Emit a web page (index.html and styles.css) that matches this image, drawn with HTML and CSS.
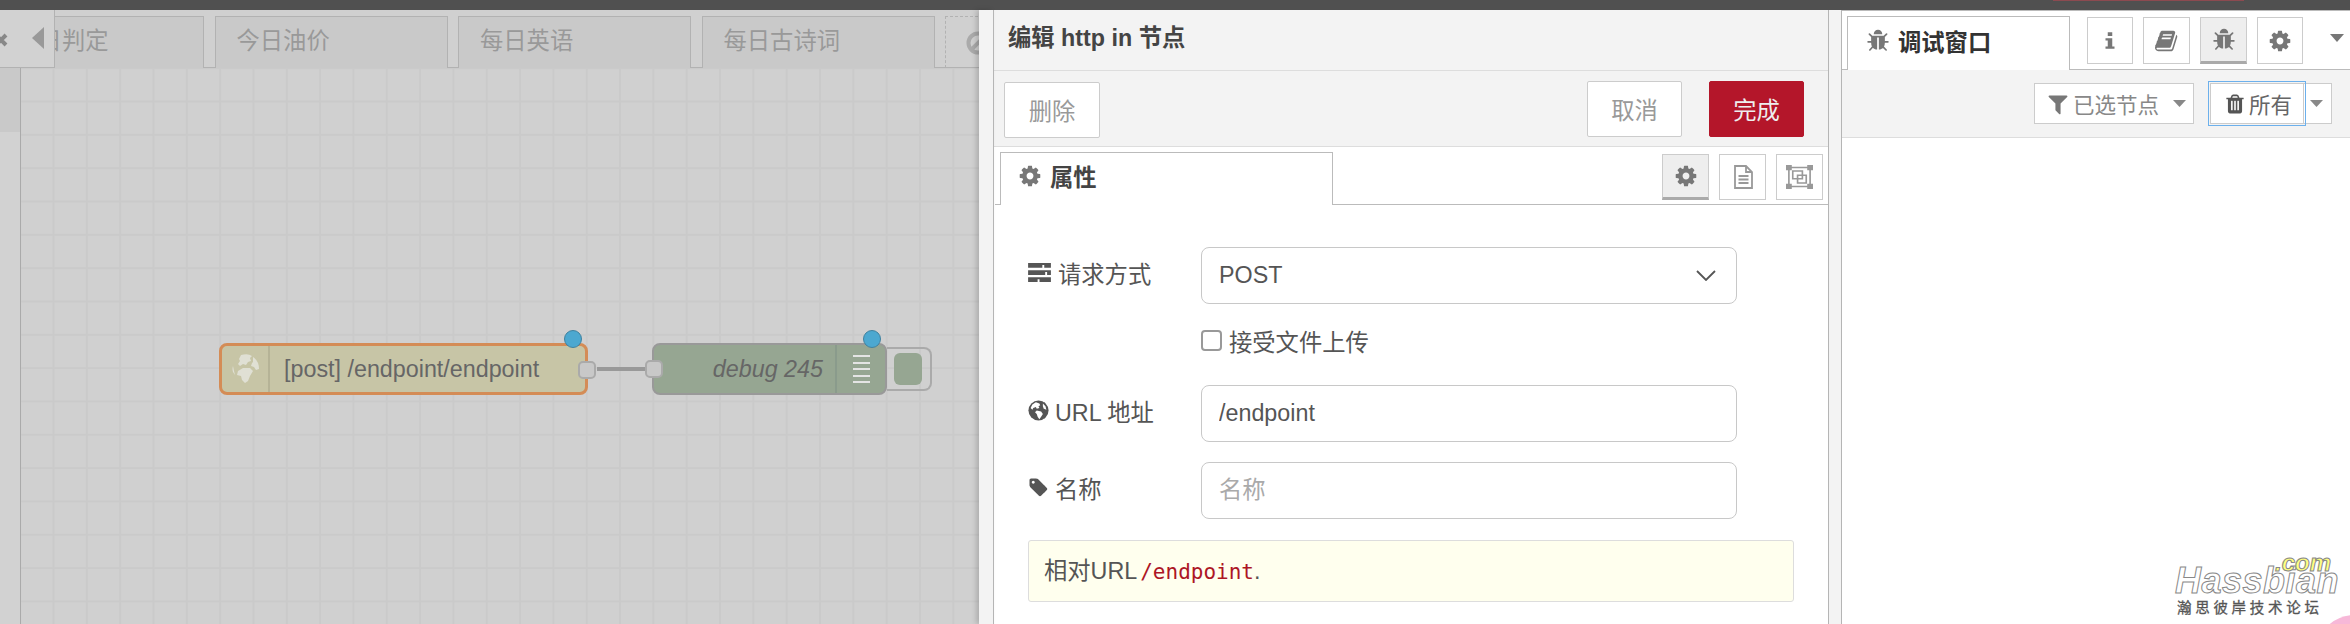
FILE: index.html
```html
<!DOCTYPE html>
<html>
  <head>
    <title>Node-RED</title>
    <link rel="stylesheet" href="styles.css">
  </head>
  <body>
    <svg class="sprite" xmlns="http://www.w3.org/2000/svg">
      <symbol id="i-cog" viewBox="0 0 1792 1792"><path d="M1152 896q0-106-75-181t-181-75-181 75-75 181 75 181 181 75 181-75 75-181zm512-109v222q0 12-8 23t-20 13l-185 28q-19 54-39 91 35 50 107 138 10 12 10 25t-9 23q-27 37-99 108t-94 71q-12 0-26-9l-138-108q-44 23-91 38-16 136-29 186-7 28-36 28h-222q-14 0-24.5-8.5t-11.5-21.5l-28-184q-49-16-90-37l-141 107q-10 9-25 9-14 0-25-11-126-114-165-168-7-10-7-23 0-12 8-23 15-21 51-66.5t54-70.5q-27-50-41-99l-183-27q-13-2-21-12.5t-8-23.5v-222q0-12 8-23t19-13l186-28q14-46 39-92-40-57-107-138-10-12-10-24 0-10 9-23 26-36 98.5-107.5t94.5-71.5q13 0 26 10l138 107q44-23 91-38 16-136 29-186 7-28 36-28h222q14 0 24.5 8.5t11.5 21.5l28 184q49 16 90 37l142-107q9-9 24-9 13 0 25 10 129 119 165 170 7 8 7 22 0 12-8 23-15 21-51 66.5t-54 70.5q26 50 41 98l183 28q13 2 21 12.5t8 23.5z"/></symbol>
      <symbol id="i-tag" viewBox="0 0 1792 1792"><path d="M576 448q0-53-37.5-90.5t-90.5-37.5-90.5 37.5-37.5 90.5 37.5 90.5 90.5 37.5 90.5-37.5 37.5-90.5zm1067 576q0 53-37 90l-491 492q-39 37-91 37-53 0-90-37l-715-716q-38-37-64.5-101t-26.5-117v-416q0-52 38-90t90-38h416q53 0 117 26.5t102 64.5l715 714q37 39 37 91z"/></symbol>
      <symbol id="i-filter" viewBox="0 0 1792 1792"><path d="M1595 295q17 41-14 70l-493 493v742q0 42-39 59-13 5-25 5-27 0-45-19l-256-256q-19-19-19-45v-486l-493-493q-31-29-14-70 17-39 59-39h1280q42 0 59 39z"/></symbol>
      <symbol id="i-trash" viewBox="0 0 1792 1792"><path d="M704 1376v-704q0-14-9-23t-23-9h-64q-14 0-23 9t-9 23v704q0 14 9 23t23 9h64q14 0 23-9t9-23zm256 0v-704q0-14-9-23t-23-9h-64q-14 0-23 9t-9 23v704q0 14 9 23t23 9h64q14 0 23-9t9-23zm256 0v-704q0-14-9-23t-23-9h-64q-14 0-23 9t-9 23v704q0 14 9 23t23 9h64q14 0 23-9t9-23zm-544-992h448l-48-117q-7-9-17-11h-317q-10 2-17 11zm928 32v64q0 14-9 23t-23 9h-96v948q0 83-47 143.5t-113 60.5h-832q-66 0-113-58.5t-47-141.5v-952h-96q-14 0-23-9t-9-23v-64q0-14 9-23t23-9h309l70-167q15-37 54-63t79-26h320q40 0 79 26t54 63l70 167h309q14 0 23 9t9 23z"/></symbol>
      <symbol id="i-bug" viewBox="0 0 1792 1792"><path d="M1696 960q0 26-19 45t-45 19h-224q0 171-67 290l208 209q19 19 19 45t-19 45q-18 19-45 19t-45-19l-198-197q-5 5-15 13t-42 28.5-65 36.5-82 29-97 13v-896h-128v896q-51 0-101.5-13.5t-87-33-66-39-43.5-32.5l-15-14-183 207q-20 21-48 21-24 0-43-16-19-18-20.5-44.5t15.5-46.5l202-227q-58-114-58-274h-224q-26 0-45-19t-19-45 19-45 45-19h224v-294l-173-173q-19-19-19-45t19-45 45-19 45 19l173 173h844l173-173q19-19 45-19t45 19 19 45-19 45l-173 173v294h224q26 0 45 19t19 45zm-480-576h-640q0-133 93.5-226.5t226.5-93.5 226.5 93.5 93.5 226.5z"/></symbol>
      <symbol id="i-book" viewBox="0 0 1792 1792"><path d="M1639 478q40 57 18 129l-275 906q-19 64-76.5 107.5t-122.5 43.5h-923q-77 0-148.5-53.5t-99.5-131.5q-24-67-2-127 0-4 3-27t4-37q1-8-3-21.5t-3-19.5q2-11 8-21t16.5-23.5 16.5-23.5q23-38 45-91.5t30-91.5q3-10 .5-30t-.5-28q3-11 17-28t17-23q21-36 42-92t25-90q1-9-2.5-32t.5-28q4-13 22-30.5t22-22.5q19-26 42.5-84.5t27.5-96.5q1-8-3-25.5t-2-26.5q2-8 9-18t18-23 17-21q8-12 16.5-30.5t15-35 16-36 19.5-32 26.5-23.5 36-11.5 47.5 5.5l-1 3q38-9 51-9h761q74 0 114 56t18 130l-274 906q-36 119-71.5 153.5t-128.5 34.5h-869q-27 0-38 15-11 16-1 43 24 70 144 70h923q29 0 56-15.5t35-41.5l300-987q7-22 5-57 38 15 59 43zm-1064 2q-4 13 2 22.5t20 9.5h608q13 0 25.5-9.5t16.5-22.5l21-64q4-13-2-22.5t-20-9.5h-608q-13 0-25.5 9.5t-16.5 22.5zm-83 256q-4 13 2 22.5t20 9.5h608q13 0 25.5-9.5t16.5-22.5l21-64q4-13-2-22.5t-20-9.5h-608q-13 0-25.5 9.5t-16.5 22.5z"/></symbol>
      <symbol id="i-info" viewBox="0 0 16 24"><path d="M5 1h6v5H5zM2 9h9v11h3v3H2v-3h3v-8H2z"/></symbol>
      <symbol id="i-file" viewBox="0 0 20 24"><path d="M2 1h11l6 6v16H2z M13 1v6h6 M5.500 11h10 M5.500 14.500h10 M5.500 18h10" fill="none" stroke="currentColor" stroke-width="1.800"/></symbol>
      <symbol id="i-expand" viewBox="0 0 28 28" preserveAspectRatio="none"><path d="M3 3h22v22H3z" fill="none" stroke="currentColor" stroke-width="1.700"/><path d="M7 7h10v9H7zM12 12h9v9h-9z" fill="none" stroke="currentColor" stroke-width="1.700"/><path fill="currentColor" d="M0 0h6v6H0zM22 0h6v6h-6zM0 22h6v6H0zM22 22h6v6h-6z"/></symbol>
      <symbol id="i-tasks" viewBox="0 0 24 20"><path d="M0 0h24v5H17V2h-2v3H0zM0 7.500h24v5H20v-3h-2v3H0zM0 15h24v5H12v-3h-2v3H0z"/></symbol>
      <symbol id="i-globe" viewBox="0 0 24 24"><circle cx="12" cy="12" r="11.500"/><path fill="#fff" d="M9 2.500 13 4l1 2-2 1 1 2-3 1-1-2-3 1-1 2-2-2 2-4zM17 4l3 3 1 4-3-1-1-3zM10 12l5 1 2 3-2 3-2 3-2-3-1-3-2-2z"/></symbol>
      <symbol id="i-globe-node" viewBox="0 0 28 30"><path d="M9 1q7-2 11 1l-2 2 1 3-3 1-2 3-3-1-3 2-2-2 2-3-1-2zM21 3q6 4 6 12l-3 1-2-3-3-1 1-3 1-1zM11 14l7 0 3 3-3 5-2 5-3 2-3-3-1-4-4-1 1-4zM1 12l1 5 1 4-2-3q-1-3 0-6z"/></symbol>
      <symbol id="i-caret" viewBox="0 0 14 8" preserveAspectRatio="none"><path d="M0 0h14L7 8z"/></symbol>
    </svg>

    <div class="topbar"><span class="deploy-edge"></span></div>

    <div class="main">
      <div class="workspace">
        <div class="tabbar">
          <div class="tab-scroll">
            <svg class="tab-close" viewBox="0 0 16 16"><path d="M3 3l10 10M13 3L3 13" stroke="#888" stroke-width="4" fill="none"/></svg>
            <svg class="tab-left" viewBox="0 0 12 22"><path d="M12 0v22L0 11z"/></svg>
          </div>
          <div class="flow-tab flow-tab-first">节假日判定</div>
          <div class="flow-tab">今日油价</div>
          <div class="flow-tab">每日英语</div>
          <div class="flow-tab">每日古诗词</div>
          <div class="flow-tab flow-tab-off">
            <svg class="tab-ban" viewBox="0 0 24 24"><circle cx="12" cy="12" r="9.500" fill="none" stroke="#aaa" stroke-width="4"/><path d="M5 19L19 5" stroke="#aaa" stroke-width="4"/></svg>
          </div>
        </div>
        <div class="work-row">
          <div class="palette"><div class="palette-head"></div></div>
          <div class="canvas">
            <div class="node node-http">
              <div class="node-icon"><svg class="icon-globe-node"><use href="#i-globe-node"/></svg></div>
              <div class="node-label">[post] /endpoint/endpoint</div>
              <span class="port port-out"></span>
              <span class="changed changed-http"></span>
            </div>
            <div class="wire"></div>
            <div class="node node-debug">
              <span class="port port-in"></span>
              <div class="node-label node-label-right">debug 245</div>
              <div class="node-icon node-icon-right">
                <i></i><i></i><i></i><i></i><i></i>
              </div>
              <span class="changed changed-debug"></span>
            </div>
            <div class="node-toggle"><span></span></div>
          </div>
        </div>
      </div>

      <div class="strip strip-left"></div>

      <div class="tray">
        <div class="tray-title">编辑 http in 节点</div>
        <div class="tray-actions">
          <button class="btn btn-delete">删除</button>
          <span class="spacer"></span>
          <button class="btn">取消</button>
          <button class="btn btn-primary">完成</button>
        </div>
        <div class="tray-tabs">
          <div class="tray-tab"><svg class="icon"><use href="#i-cog"/></svg>属性</div>
          <span class="spacer"></span>
          <div class="mini-tab mini-tab-on"><svg class="icon"><use href="#i-cog"/></svg></div>
          <div class="mini-tab"><svg class="icon icon-light"><use href="#i-file"/></svg></div>
          <div class="mini-tab"><svg class="icon icon-light icon-expand"><use href="#i-expand"/></svg></div>
        </div>
        <div class="form">
          <div class="form-row">
            <label class="form-label"><svg class="icon-tasks"><use href="#i-tasks"/></svg>请求方式</label>
            <div class="select">POST
              <svg class="chevron" viewBox="0 0 20 11"><path d="M1 1l9 9 9-9" fill="none" stroke="#555" stroke-width="1.800"/></svg>
            </div>
          </div>
          <div class="form-check">
            <span class="checkbox"></span>接受文件上传
          </div>
          <div class="form-row form-row-url">
            <label class="form-label"><svg class="icon-label"><use href="#i-globe"/></svg>URL 地址</label>
            <input class="input" type="text" value="/endpoint">
          </div>
          <div class="form-row form-row-name">
            <label class="form-label"><svg class="icon-label"><use href="#i-tag"/></svg>名称</label>
            <input class="input" type="text" placeholder="名称">
          </div>
          <div class="tip">相对URL<code>/endpoint</code>.</div>
        </div>
      </div>

      <div class="strip strip-right"></div>

      <div class="sidebar">
        <div class="side-tabs">
          <div class="side-tab"><svg class="icon"><use href="#i-bug"/></svg>调试窗口</div>
          <div class="side-btn side-btn-info"><svg class="icon-info"><use href="#i-info"/></svg></div>
          <div class="side-btn side-btn-book"><svg class="icon"><use href="#i-book"/></svg></div>
          <div class="side-btn side-btn-bug"><svg class="icon"><use href="#i-bug"/></svg></div>
          <div class="side-btn side-btn-cog"><svg class="icon"><use href="#i-cog"/></svg></div>
          <svg class="side-caret"><use href="#i-caret"/></svg>
        </div>
        <div class="side-tools">
          <div class="tool tool-filter">
            <svg class="icon"><use href="#i-filter"/></svg><span class="tool-text">已选节点</span>
            <svg class="tool-caret"><use href="#i-caret"/></svg>
          </div>
          <div class="tool tool-clear"><svg class="icon"><use href="#i-trash"/></svg><span class="tool-text">所有</span></div>
          <div class="tool tool-more"><svg class="tool-caret"><use href="#i-caret"/></svg></div>
        </div>
        <div class="watermark">
          <span class="wm-com">.com</span>
          <span class="wm-name">Hassbian</span>
          <span class="wm-cn">瀚思彼岸技术论坛</span>
        </div>
        <span class="wm-blob"></span>
      </div>
    </div>
  </body>
</html>
```

FILE: styles.css
```css
* {
    box-sizing: border-box;
}

html, body {
    margin: 0;
    height: 100%;
    overflow: hidden;
}

body {
    width: 2350px;
    height: 624px;
    font-family: "Liberation Sans", "Noto Sans CJK SC", sans-serif;
    font-size: 23.3px;
    color: #555;
    background: #fff;
    display: flex;
    flex-direction: column;
}

.sprite {
    display: none;
}

.spacer {
    flex: 1;
}

.topbar {
    height: 10px;
    flex: none;
    background: #505050;
    padding-left: 2053px;
}

.deploy-edge {
    display: block;
    width: 191px;
    height: 1px;
    background: #8c4a50;
}

.main {
    flex: 1;
    display: flex;
    min-height: 0;
}

/* dimmed workspace */
.workspace {
    width: 979px;
    flex: none;
    display: flex;
    flex-direction: column;
    background: #d0d0d0;
    overflow: hidden;
}

.tabbar {
    height: 58px;
    flex: none;
    position: relative;
    display: flex;
    gap: 10.5px;
    padding: 6px 0 0 0;
    margin-left: -30px;
    border-bottom: 1px solid #b2b2b2;
}

.tab-scroll {
    position: absolute;
    left: 30px;
    top: 0;
    width: 55px;
    height: 58px;
    background: #d2d2d2;
    border-right: 1px solid #b2b2b2;
    border-bottom: 1px solid #b2b2b2;
    z-index: 2;
}

.tab-close {
    position: absolute;
    left: -7px;
    top: 22px;
    width: 16px;
    height: 16px;
}

.tab-left {
    position: absolute;
    left: 32px;
    top: 17px;
    width: 12px;
    height: 22px;
    fill: #999;
}

.flow-tab {
    width: 233px;
    flex: none;
    height: 52px;
    line-height: 49px;
    padding-left: 21px;
    background: #c9c9c9;
    border: 1px solid #b2b2b2;
    border-bottom: 0;
    color: #999;
    white-space: nowrap;
}

.flow-tab-first {
    width: 234px;
    padding-left: 21px;
}

.flow-tab-off {
    background: transparent;
    border-style: dashed;
    padding-left: 20px;
}

.tab-ban {
    width: 24px;
    height: 24px;
    vertical-align: -6px;
}

.work-row {
    flex: 1;
    display: flex;
    min-height: 0;
}

.palette {
    width: 21px;
    flex: none;
    background: #d2d2d2;
    border-right: 1px solid #aaa;
}

.palette-head {
    height: 64px;
    background: #c9c9c9;
}

/* grid is 20px of the app at 1.667 zoom */
.canvas {
    flex: 1;
    position: relative;
    background-color: #d0d0d0;
    background-image:
        linear-gradient(90deg, #cacaca 1.6px, transparent 1.6px),
        linear-gradient(#cacaca 1.6px, transparent 1.6px);
    background-size: 33.33px 33.33px;
    background-position: 31.500px 0, 0 32.500px;
}

.node {
    position: absolute;
    top: 275px;
    height: 52px;
    display: flex;
    align-items: center;
    border-radius: 8px;
    color: #666;
}

.node-http {
    left: 198px;
    width: 369px;
    background: #c7c5a6;
    border: 3px solid #d48c56;
}

.node-debug {
    left: 631px;
    width: 235px;
    background: #96a692;
    border: 2px solid #999;
}

.node-icon {
    width: 48px;
    height: 100%;
    flex: none;
    border-right: 2px solid #b5b396;
    display: flex;
    align-items: center;
    justify-content: center;
}

.icon-globe-node {
    width: 28px;
    height: 30px;
    fill: #e0e0d4;
    margin-left: 2px;
}

.node-label {
    padding-left: 14px;
    white-space: nowrap;
}

.node-label-right {
    flex: 1;
    text-align: right;
    padding: 0 12px 0 0;
    font-style: italic;
}

.node-icon-right {
    width: 50px;
    border-right: 0;
    border-left: 2px solid #8a9b8c;
    flex-direction: column;
    gap: 4.500px;
}

.node-icon-right i {
    display: block;
    width: 17px;
    height: 2px;
    background: #e4e4e4;
}

.port {
    position: absolute;
    width: 18px;
    height: 18px;
    top: 15px;
    background: #c8c8c8;
    border: 2px solid #aaa;
    border-radius: 5px;
}

.port-out {
    right: -11px;
}

.port-in {
    left: -9px;
}

.changed {
    position: absolute;
    width: 18px;
    height: 18px;
    border-radius: 50%;
    background: #4ca8d0;
    border: 1.500px solid #41829f;
}

.changed-http {
    top: -16px;
    right: 3px;
}

.changed-debug {
    top: -15px;
    right: 4px;
}

.wire {
    position: absolute;
    left: 576px;
    top: 299px;
    width: 50px;
    height: 4px;
    background: #999;
}

.node-toggle {
    position: absolute;
    left: 866px;
    top: 279px;
    width: 45px;
    height: 44px;
    border: 2px solid #aaa;
    border-left: 0;
    border-radius: 0 8px 8px 0;
    display: flex;
    align-items: center;
    padding-left: 7px;
}

.node-toggle span {
    display: block;
    width: 28px;
    height: 32px;
    background: #96a692;
    border-radius: 6px;
}

/* gaps beside the tray */
.strip {
    flex: none;
    background: #f3f3f3;
    border-right: 1px solid #b5b5b5;
}

.strip-left {
    width: 15px;
    box-shadow: -3px 0 5px rgba(0, 0, 0, 0.16);
    position: relative;
}

.strip-right {
    width: 14px;
    border-left: 1px solid #b5b5b5;
}

/* edit tray */
.tray {
    width: 834px;
    flex: none;
    display: flex;
    flex-direction: column;
}

.tray-title {
    height: 61px;
    flex: none;
    padding-left: 14px;
    line-height: 56px;
    font-weight: bold;
    color: #444;
    background: #f3f3f3;
    border-bottom: 1px solid #ddd;
}

.tray-actions {
    height: 76px;
    flex: none;
    display: flex;
    align-items: flex-start;
    padding: 10px 24px 0 10px;
    background: #f3f3f3;
    border-bottom: 1px solid #ddd;
}

.btn {
    width: 95px;
    height: 56px;
    font: inherit;
    color: #999;
    background: #fff;
    border: 1px solid #ccc;
    border-radius: 2px;
    padding: 0;
}

.btn-delete {
    width: 96px;
    margin-top: 1px;
}

.btn-primary {
    margin-left: 27px;
    color: #eee;
    background: #b4162a;
    border-color: #b4162a;
}

.tray-tabs {
    height: 58px;
    flex: none;
    display: flex;
    padding: 5px 5px 0 5px;
    margin-left: 1px;
    border-bottom: 1px solid #bbb;
}

.tray-tab {
    width: 333px;
    height: 53px;
    background: #fff;
    border: 1px solid #bbb;
    border-bottom: 0;
    padding: 0 0 6px 17px;
    display: flex;
    align-items: center;
    font-weight: bold;
    color: #444;
}

.tray-tab .icon {
    margin-right: 8px;
}

.icon {
    width: 24px;
    height: 24px;
    fill: #777;
    color: #999;
    flex: none;
}

.icon-light {
    fill: none;
}

.icon-expand {
    width: 27px;
}

.mini-tab {
    width: 47px;
    height: 46px;
    margin: 2px 0 0 10px;
    border: 1px solid #ccc;
    display: flex;
    align-items: center;
    justify-content: center;
}

.mini-tab-on {
    background: #eee;
    border-bottom: 3px solid #aaa;
}

.form {
    padding: 42px 33px 0 34px;
}

.form-row {
    display: flex;
    align-items: center;
}

.form-label {
    width: 173px;
    flex: none;
    display: flex;
    align-items: center;
    margin-top: -6px;
}

.icon-tasks {
    width: 23px;
    height: 19px;
    fill: #555;
    margin-right: 7px;
}

.icon-label {
    width: 21px;
    height: 21px;
    fill: #555;
    margin-right: 6px;
}

.select, .input {
    width: 536px;
    height: 57px;
    border: 1px solid #c8c8c8;
    border-radius: 8px;
    padding: 0 17px;
    font: inherit;
    color: #555;
    background: #fff;
}

.select {
    display: flex;
    align-items: center;
    justify-content: space-between;
}

.input::placeholder {
    color: #aaa;
}

.chevron {
    width: 20px;
    height: 11px;
    margin-right: 3px;
}

.form-check {
    display: flex;
    align-items: center;
    margin: 26px 0 0 173px;
    height: 21px;
}

.checkbox {
    width: 21px;
    height: 21px;
    border: 2px solid #999;
    border-radius: 4px;
    margin-right: 7px;
    background: #fff;
}

.form-row-url {
    margin-top: 34px;
}

.form-row-name {
    margin-top: 20px;
}

.tip {
    width: 766px;
    height: 62px;
    margin-top: 21px;
    padding-left: 15px;
    line-height: 60px;
    background: #ffffee;
    border: 1px solid #ddd;
    border-radius: 3px;
}

.tip code {
    font-family: "DejaVu Sans Mono", monospace;
    font-size: 21px;
    color: #ad1625;
    margin-left: 3px;
}

/* debug sidebar */
.sidebar {
    flex: 1;
    position: relative;
    overflow: hidden;
    display: flex;
    flex-direction: column;
    border-top: 1px solid #bbb;
}

.side-tabs {
    height: 59px;
    flex: none;
    display: flex;
    padding: 5px 0 0 5px;
    border-bottom: 1px solid #bbb;
}

.side-tab {
    width: 223px;
    height: 54px;
    background: #fff;
    border: 1px solid #bbb;
    border-bottom: 0;
    padding: 0 0 5px 18px;
    margin-right: 17px;
    display: flex;
    align-items: center;
    font-weight: bold;
    color: #333;
}

.side-tab .icon {
    margin-right: 8px;
}

.side-btn {
    height: 47px;
    margin-top: 1px;
    border: 1px solid #ccc;
    display: flex;
    align-items: center;
    justify-content: center;
}

.side-btn-info {
    width: 46px;
}

.side-btn-book {
    width: 47px;
    margin-left: 10px;
}

.side-btn-bug {
    width: 47px;
    margin-left: 10px;
    background: #eee;
    border-bottom: 3px solid #aaa;
}

.side-btn-cog {
    width: 46px;
    margin-left: 10px;
}

.icon-info {
    width: 12px;
    height: 19px;
    fill: #777;
}

.side-caret {
    display: block;
    width: 14px;
    height: 8px;
    flex: none;
    fill: #777;
    margin: 18px 0 0 27px;
}

.side-tools {
    height: 68px;
    flex: none;
    display: flex;
    padding: 13px 0 0 192px;
    background: #f3f3f3;
    border-bottom: 1px solid #ddd;
}

.tool {
    height: 41px;
    display: flex;
    align-items: center;
    background: #fff;
    border: 1px solid #ccc;
    color: #888;
    font-size: 21.500px;
    white-space: nowrap;
}

.tool-text {
    flex: none;
}

.tool-filter {
    width: 160px;
    padding-left: 11px;
}

.tool-filter .icon {
    margin-right: 3px;
}

.tool-caret {
    width: 13px;
    height: 7px;
    flex: none;
    fill: #888;
    margin-left: 14px;
}

.tool-clear {
    width: 94px;
    margin-left: 16px;
    padding-left: 13px;
    color: #666;
    outline: 1px solid #6cb0ec;
    outline-offset: 1px;
    position: relative;
}

.tool-clear .icon {
    width: 22px;
    height: 22px;
    fill: #555;
    margin-right: 3px;
}

.tool-more {
    width: 28px;
    border-left: 0;
}

.tool-more .tool-caret {
    margin-left: 6px;
}

.watermark {
    position: absolute;
    left: 333px;
    top: 544px;
    width: 165px;
    height: 70px;
}

.wm-name, .wm-com, .wm-cn {
    position: absolute;
    white-space: nowrap;
}

.wm-name {
    left: 0;
    top: 5px;
    font-size: 36px;
    font-weight: bold;
    font-style: italic;
    letter-spacing: 0.5px;
    color: #fff;
    -webkit-text-stroke: 1px #888;
}

.wm-com {
    left: 100px;
    top: -6px;
    font-size: 24px;
    font-weight: bold;
    font-style: italic;
    color: #ffff80;
    -webkit-text-stroke: 1px #888;
    z-index: 1;
}

.wm-cn {
    left: 2px;
    top: 43px;
    font-size: 14.500px;
    letter-spacing: 3.700px;
    line-height: 20px;
    color: #555;
    -webkit-text-stroke: 0.3px #555;
}

.wm-blob {
    position: absolute;
    left: 473px;
    top: 604px;
    width: 80px;
    height: 80px;
    border-radius: 50%;
    background: #f7b8d8;
}
```
